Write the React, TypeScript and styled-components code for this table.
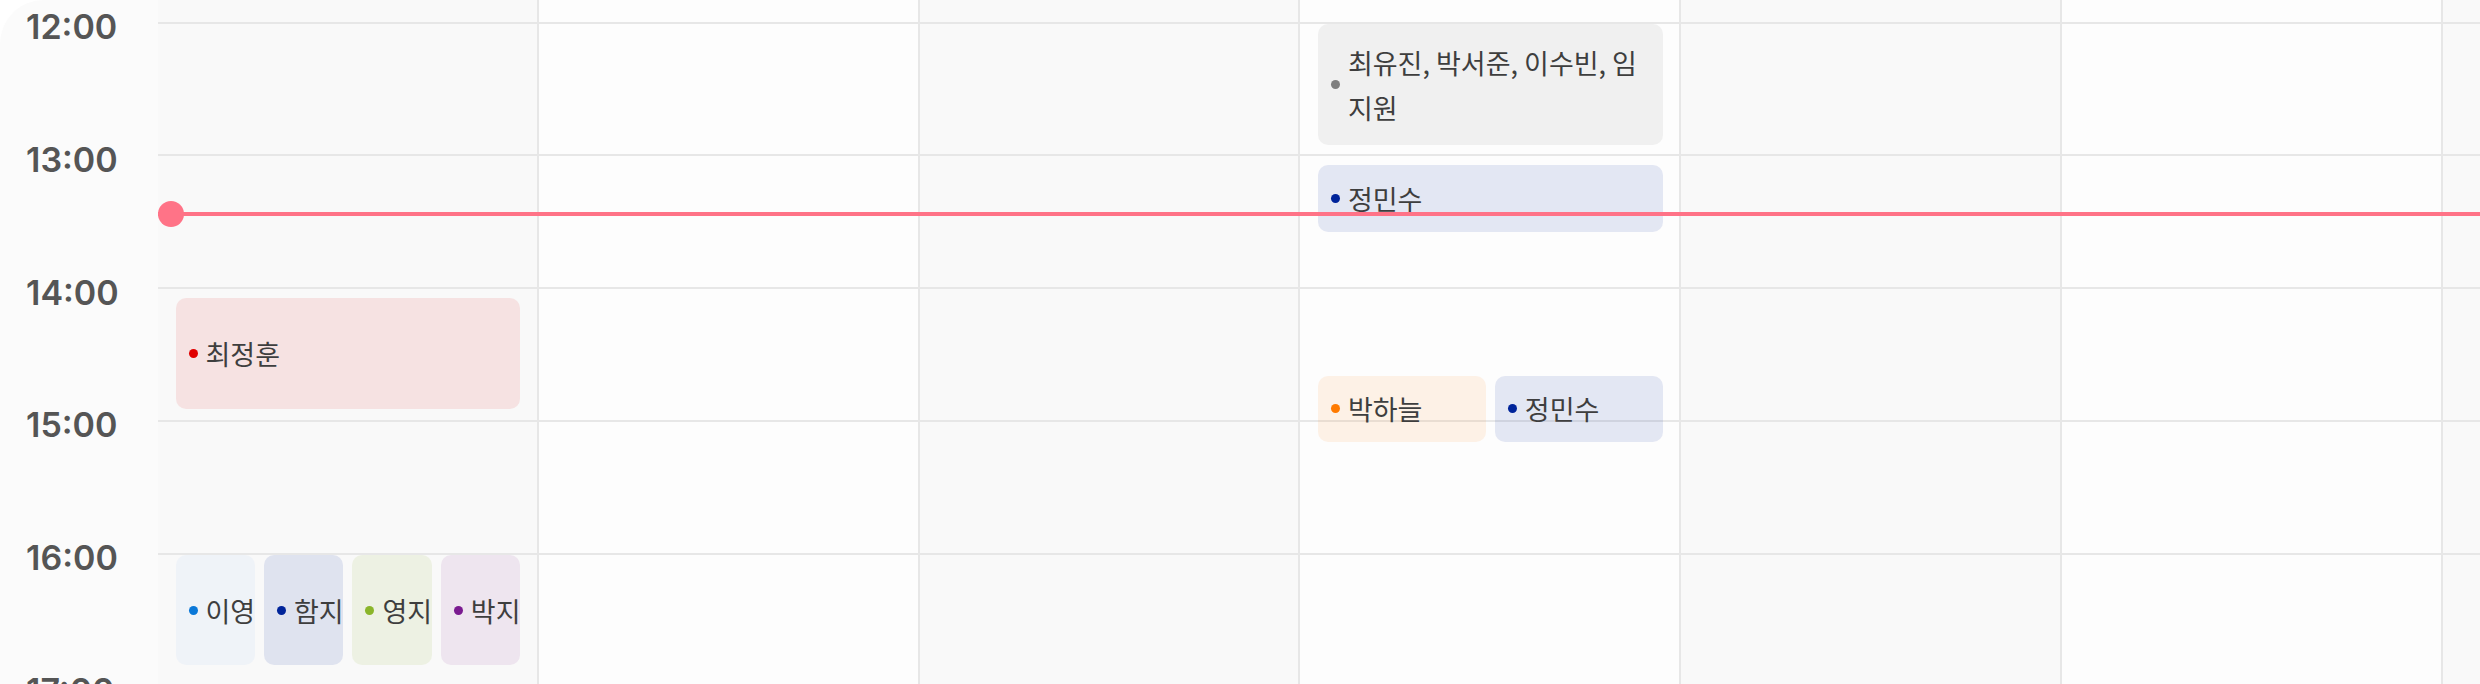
import React from 'react';
import styled, { createGlobalStyle } from 'styled-components';

const HOUR = 132.75;
const TOP_STUB = 21.5;
const PX_PER_MIN = HOUR / 60;
const COL_W = 380.8;

const GlobalStyle = createGlobalStyle`
  html, body { margin: 0; padding: 0; background: #ffffff; }
  body { font-family: Inter, "Noto Sans CJK KR", sans-serif; }
  #root { width: 100vw; height: 684px; overflow: hidden; }
`;

const Page = styled.div`
  display: flex;
  width: 100%;
  height: 684px;
  overflow: hidden;
  background: #ffffff;
`;

const TimeColumn = styled.div`
  flex: none;
  width: 158px;
  height: 100%;
  box-sizing: border-box;
  padding-top: 10.2px;
  background: #fbfbfb;
  border-top-left-radius: 44px;
  display: flex;
  flex-direction: column;
`;

const TimeSlot = styled.div`
  flex: none;
  height: ${HOUR}px;
  padding-left: 26px;
  font-family: Inter, sans-serif;
  font-weight: 600;
  font-size: 34px;
  line-height: 34px;
  color: #555555;
`;

const DaysArea = styled.div`
  position: relative;
  flex: none;
  display: flex;
  height: 100%;
`;

const DayColumn = styled.div<{ $shade: boolean }>`
  position: relative;
  flex: none;
  width: ${COL_W}px;
  height: 100%;
  box-sizing: border-box;
  border-right: 2px solid #e7e7e7;
  background: ${(p) => (p.$shade ? '#f9f9f9' : '#fdfdfd')};
  display: flex;
  flex-direction: column;
`;

const TopStub = styled.div`
  flex: none;
  height: ${TOP_STUB}px;
`;

const HourCell = styled.div`
  flex: none;
  height: ${HOUR}px;
  box-sizing: border-box;
  border-top: 2px solid #e7e7e7;
`;

const EventRow = styled.div`
  position: absolute;
  left: 17.5px;
  right: 16.5px;
  display: flex;
  gap: 9px;
`;

const EventCard = styled.div<{ $tint: string; $compact: boolean }>`
  flex: 1 1 0;
  min-width: 0;
  box-sizing: border-box;
  display: flex;
  align-items: center;
  padding: 0 10px 0 13px;
  border-radius: 10px;
  background: ${(p) => p.$tint};
  overflow: hidden;
  white-space: ${(p) => (p.$compact ? 'nowrap' : 'normal')};
`;

const Dot = styled.span<{ $color: string }>`
  flex: none;
  width: 9px;
  height: 9px;
  border-radius: 50%;
  margin-right: 8px;
  background: ${(p) => p.$color};
`;

const Label = styled.span`
  font-family: "Noto Sans CJK KR", "Noto Sans", sans-serif;
  font-size: 27px;
  line-height: 45px;
  color: #3e3e3e;
`;

const NowLine = styled.div`
  position: absolute;
  left: 0;
  right: 0;
  top: 211.5px;
  height: 4px;
  background: #ff7387;
  z-index: 2;
  pointer-events: none;
`;

const NowDot = styled.span`
  position: absolute;
  left: 0;
  top: 50%;
  width: 26px;
  height: 26px;
  margin-top: -13px;
  border-radius: 50%;
  background: #ff7387;
`;

type Ev = { name: string; color: string; tint: string };
type Group = { start: number; end: number; items: Ev[] };

const RED = '#e00000';
const GRAY = '#7f7f7f';
const NAVY = '#00249a';
const ORANGE = '#ff7a00';
const BLUE = '#0a78d8';
const GREEN = '#8ab52a';
const PURPLE = '#7a1a90';

const days: Group[][] = [
  [
    { start: 125, end: 175, items: [{ name: '최정훈', color: RED, tint: 'rgba(224,0,0,0.09)' }] },
    {
      start: 241,
      end: 291,
      items: [
        { name: '이영', color: BLUE, tint: 'rgba(0,90,220,0.04)' },
        { name: '함지', color: NAVY, tint: 'rgba(0,36,160,0.1)' },
        { name: '영지', color: GREEN, tint: 'rgba(138,181,40,0.1)' },
        { name: '박지', color: PURPLE, tint: 'rgba(122,26,144,0.085)' },
      ],
    },
  ],
  [],
  [],
  [
    {
      start: 1,
      end: 56,
      items: [{ name: '최유진, 박서준, 이수빈, 임지원', color: GRAY, tint: 'rgba(128,128,128,0.1)' }],
    },
    { start: 65, end: 95, items: [{ name: '정민수', color: NAVY, tint: 'rgba(0,36,160,0.1)' }] },
    {
      start: 160,
      end: 190,
      items: [
        { name: '박하늘', color: ORANGE, tint: 'rgba(255,122,0,0.09)' },
        { name: '정민수', color: NAVY, tint: 'rgba(0,36,160,0.1)' },
      ],
    },
  ],
  [],
  [],
  [],
];

const hours = [12, 13, 14, 15, 16, 17];

export default function App() {
  return (
    <>
      <GlobalStyle />
      <Page>
        <TimeColumn>
          {hours.map((h) => (
            <TimeSlot key={h}>{`${h}:00`}</TimeSlot>
          ))}
        </TimeColumn>
        <DaysArea>
          {days.map((groups, i) => (
            <DayColumn key={i} $shade={i % 2 === 0}>
              <TopStub />
              {hours.map((h) => (
                <HourCell key={h} />
              ))}
              {groups.map((g, gi) => (
                <EventRow
                  key={gi}
                  style={{
                    top: TOP_STUB + g.start * PX_PER_MIN,
                    height: (g.end - g.start) * PX_PER_MIN,
                  }}
                >
                  {g.items.map((ev, ei) => (
                    <EventCard key={ei} $tint={ev.tint} $compact={g.items.length > 1}>
                      <Dot $color={ev.color} />
                      <Label>{ev.name}</Label>
                    </EventCard>
                  ))}
                </EventRow>
              ))}
            </DayColumn>
          ))}
          <NowLine>
            <NowDot />
          </NowLine>
        </DaysArea>
      </Page>
    </>
  );
}
